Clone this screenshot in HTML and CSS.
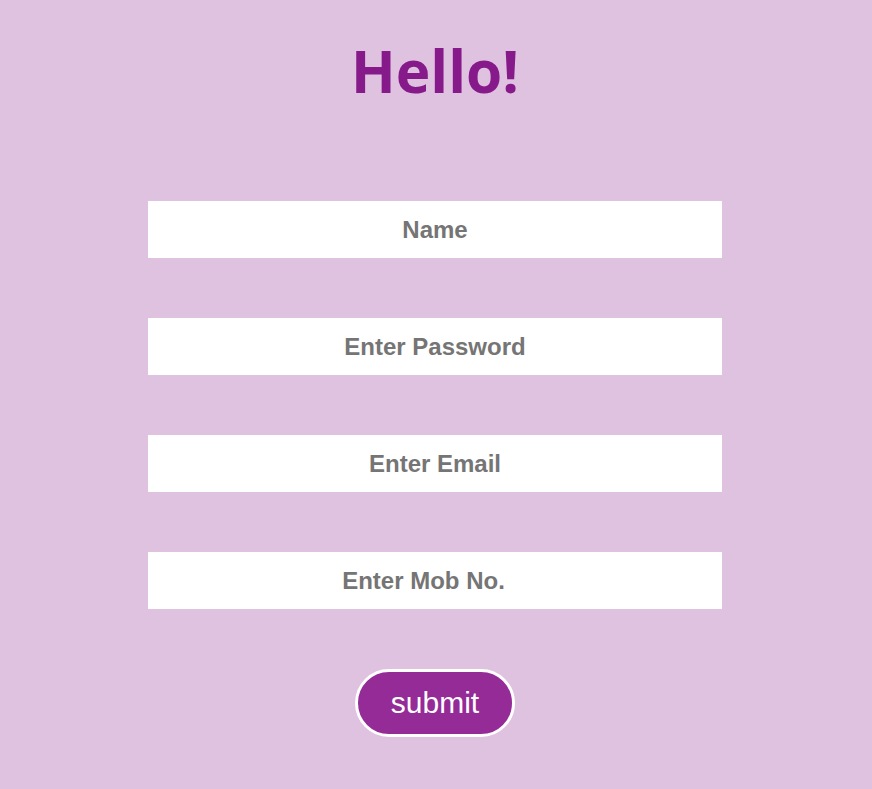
FILE: index.html
```html
<!DOCTYPE html>
<html>
<head>
<meta charset="utf-8">
<link rel="stylesheet" href="styles.css">
</head>
<body>
<div class="page">
  <h1 class="title">Hello!</h1>
  <form class="form">
    <input class="field" type="text" placeholder="Name">
    <input class="field" type="password" placeholder="Enter Password">
    <input class="field" type="email" placeholder="Enter Email">
    <input class="field field-number" type="number" placeholder="Enter Mob No.">
    <button class="submit" type="button">submit</button>
  </form>
</div>
</body>
</html>
```
FILE: styles.css
```css
html, body {
  margin: 0;
  padding: 0;
  background: #dfc1e0;
  height: 100%;
}
.page {
  display: flex;
  flex-direction: column;
  align-items: center;
  padding-top: 24px;
  padding-right: 2px;
}
.title {
  margin: 0;
  font-family: "Open Sans", sans-serif;
  font-weight: 700;
  font-size: 58.5px;
  line-height: 92px;
  color: #861a8a;
}
.form {
  margin-top: 85px;
  display: flex;
  flex-direction: column;
  align-items: center;
  gap: 60px;
}
.field {
  box-sizing: border-box;
  width: 574px;
  height: 57px;
  border: none;
  outline: none;
  background: #ffffff;
  text-align: center;
  font-family: "Liberation Sans", Arial, sans-serif;
  font-weight: 700;
  font-size: 24px;
  color: #333;
  padding: 1px 2px;
}
.field-number {
  padding-right: 10px;
}
.field::placeholder {
  color: #757575;
  opacity: 1;
}
.submit {
  box-sizing: border-box;
  width: 160px;
  height: 68px;
  border: 3px solid #ffffff;
  border-radius: 34px;
  background: #952b97;
  color: #ffffff;
  font-family: "Liberation Sans", Arial, sans-serif;
  font-size: 30px;
  padding: 0;
}
```
